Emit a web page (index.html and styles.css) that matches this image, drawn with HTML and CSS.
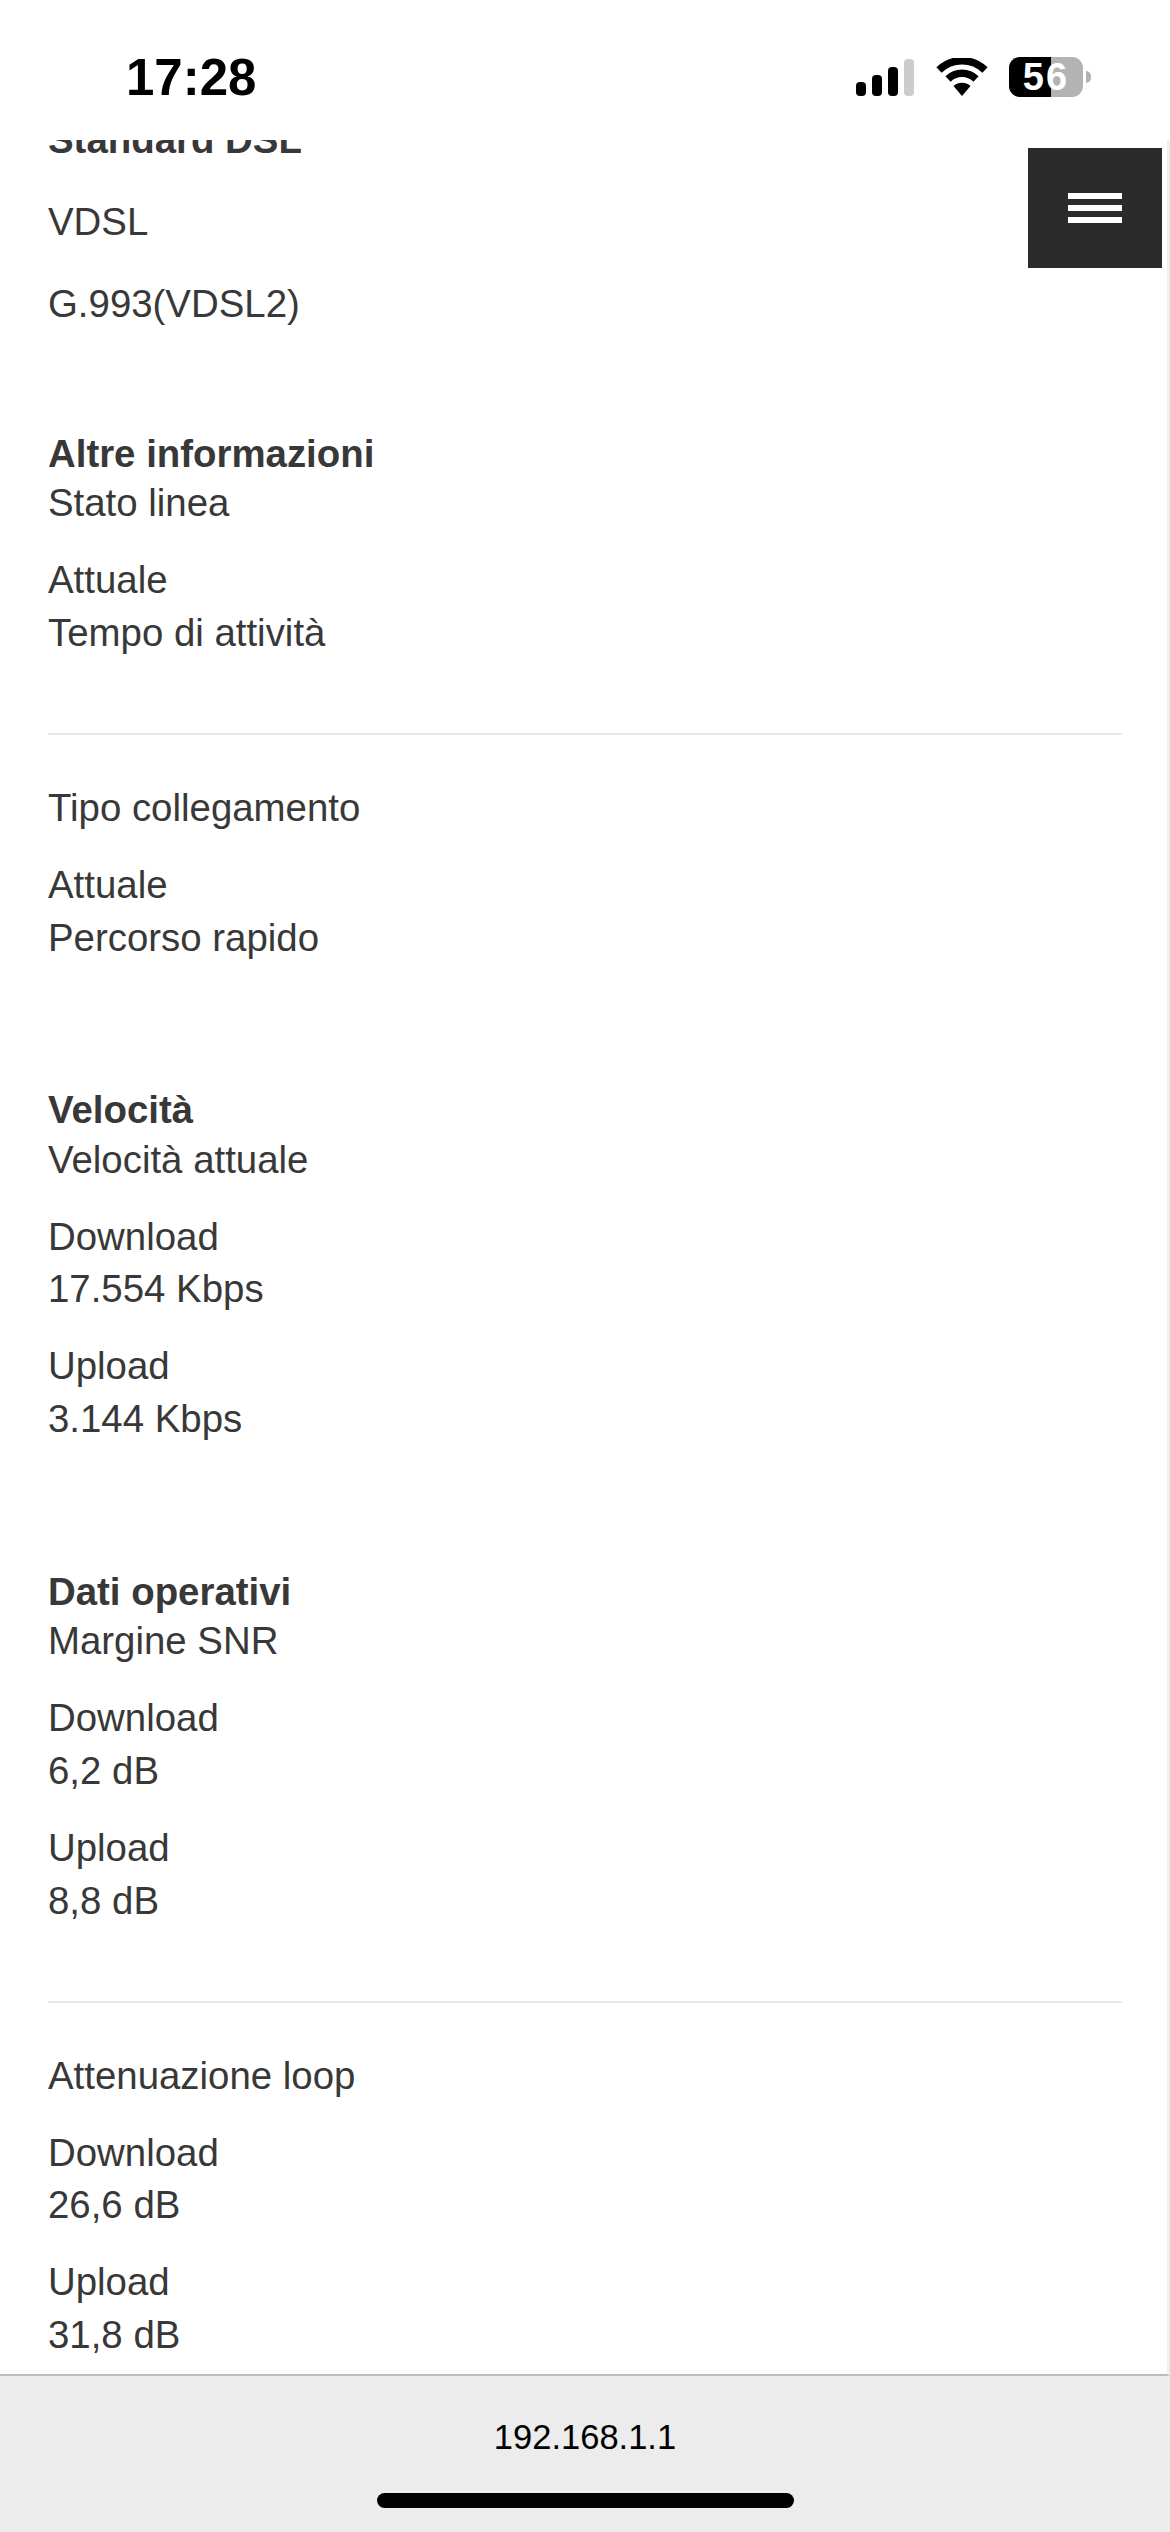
FILE: index.html
```html
<!DOCTYPE html>
<html>

<head>
    <title>192.168.1.1</title>
    <link rel="stylesheet" href="styles.css">
</head>

<body>
    <div class="phone">
        <div class="status-bar">
            <div class="clock">17:28</div>
            <div class="status-icons">
                <svg class="signal" width="58" height="38" viewBox="0 0 58 38">
                    <rect x="0" y="24" width="10" height="14" rx="4" fill="#000"/>
                    <rect x="16" y="17" width="10" height="21" rx="4" fill="#000"/>
                    <rect x="32" y="9" width="10" height="29" rx="4" fill="#000"/>
                    <rect x="48" y="1" width="10" height="37" rx="4" fill="#ccc"/>
                </svg>
                <svg class="wifi" width="52" height="38" viewBox="0 0 52 38">
                    <path d="M3 12 A33 33 0 0 1 49 12" fill="none" stroke="#000" stroke-width="7.500"/>
                    <path d="M12 21 A20 20 0 0 1 40 21" fill="none" stroke="#000" stroke-width="7.500"/>
                    <path d="M17.500 28 L26 38 L34.500 28 A13 13 0 0 0 17.500 28 Z" fill="#000"/>
                </svg>
                <div class="battery">
                    <div class="battery-body">
                        <div class="battery-fill"></div>
                        <span class="battery-num">56</span>
                    </div>
                    <div class="battery-tip"></div>
                </div>
            </div>
        </div>

        <div class="page">
            <div class="content">
                <p class="title intro">Standard DSL</p>
                <p class="intro">VDSL</p>
                <p>G.993(VDSL2)</p>

                <div class="section first">
                    <p class="title">Altre informazioni</p>
                    <p>Stato linea</p>
                    <p>Attuale<br>Tempo di attività</p>
                </div>
                <hr>
                <p>Tipo collegamento</p>
                <p>Attuale<br>Percorso rapido</p>

                <div class="section">
                    <p class="title">Velocità</p>
                    <p>Velocità attuale</p>
                    <p>Download<br>17.554 Kbps</p>
                    <p>Upload<br>3.144 Kbps</p>
                </div>

                <div class="section">
                    <p class="title">Dati operativi</p>
                    <p>Margine SNR</p>
                    <p>Download<br>6,2 dB</p>
                    <p>Upload<br>8,8 dB</p>
                </div>
                <hr>
                <p>Attenuazione loop</p>
                <p>Download<br>26,6 dB</p>
                <p>Upload<br>31,8 dB</p>
            </div>
            <div class="menu-button">
                <span></span>
                <span></span>
                <span></span>
            </div>
        </div>

        <div class="address-bar">
            <div class="address">192.168.1.1</div>
            <div class="home-bar"></div>
        </div>
    </div>
</body>

</html>
```

FILE: styles.css
```css
* {
    box-sizing: border-box;
}

body {
    margin: 0;
    background-color: #fff;
    font-family: "Liberation Sans", Arial, sans-serif;
}

.phone {
    width: 1170px;
    height: 2532px;
    display: flex;
    flex-direction: column;
    overflow: hidden;
}

.status-bar {
    height: 140px;
    flex-shrink: 0;
    display: flex;
    justify-content: space-between;
    background-color: #fff;
    padding: 53px 79px 0 126px;
}

.clock {
    font-size: 51px;
    line-height: 50px;
    font-weight: bold;
    color: #000;
}

.status-icons {
    display: flex;
    align-items: flex-start;
    gap: 22px;
    padding-top: 5px;
}

.battery {
    display: flex;
    align-items: center;
    gap: 3px;
    margin-top: -1px;
    margin-left: -1px;
}

.battery-body {
    position: relative;
    width: 74px;
    height: 40px;
    border-radius: 11px;
    background-color: #b3b3b3;
    overflow: hidden;
}

.battery-fill {
    width: 57%;
    height: 100%;
    background-color: #000;
}

.battery-num {
    position: absolute;
    left: 0;
    right: 0;
    top: 0;
    color: #fff;
    font-size: 38px;
    line-height: 40px;
    font-weight: bold;
    text-align: center;
    letter-spacing: 2px;
}

.battery-tip {
    width: 5px;
    height: 12px;
    border-radius: 0 6px 6px 0;
    background-color: #b3b3b3;
}

.page {
    position: relative;
    flex: 1;
    min-height: 0;
    overflow: hidden;
    border-right: 3px solid #eee;
    border-bottom: 2px solid #bdbdbd;
}

.content {
    margin-top: -26px;
    padding: 0 45px 0 48px;
    color: #383838;
    font-size: 38.400px;
    line-height: 52.800px;
}

.content p {
    margin: 0 0 24.200px 0;
}

.content .title {
    margin: 0 0 -3.500px 0;
    font-weight: bold;
}

.content .intro {
    margin-bottom: 29px;
}

.section {
    margin-top: 120px;
}

.section.first {
    margin-top: 97.500px;
}

hr {
    height: 2px;
    margin: 73px 0 47px 0;
    border: none;
    background-color: #e8e8e8;
}

.menu-button {
    position: absolute;
    top: 8px;
    right: 5px;
    width: 134px;
    height: 120px;
    display: flex;
    flex-direction: column;
    justify-content: center;
    align-items: center;
    gap: 6px;
    background-color: #2b2b2b;
}

.menu-button span {
    width: 54px;
    height: 6px;
    background-color: #fff;
}

.address-bar {
    height: 156px;
    flex-shrink: 0;
    display: flex;
    flex-direction: column;
    align-items: center;
    background-color: #ececec;
    padding-top: 40px;
}

.address {
    font-size: 34.500px;
    line-height: 42px;
    color: #000;
}

.home-bar {
    width: 417px;
    height: 15px;
    margin-top: 35px;
    border-radius: 8px;
    background-color: #000;
}
```
